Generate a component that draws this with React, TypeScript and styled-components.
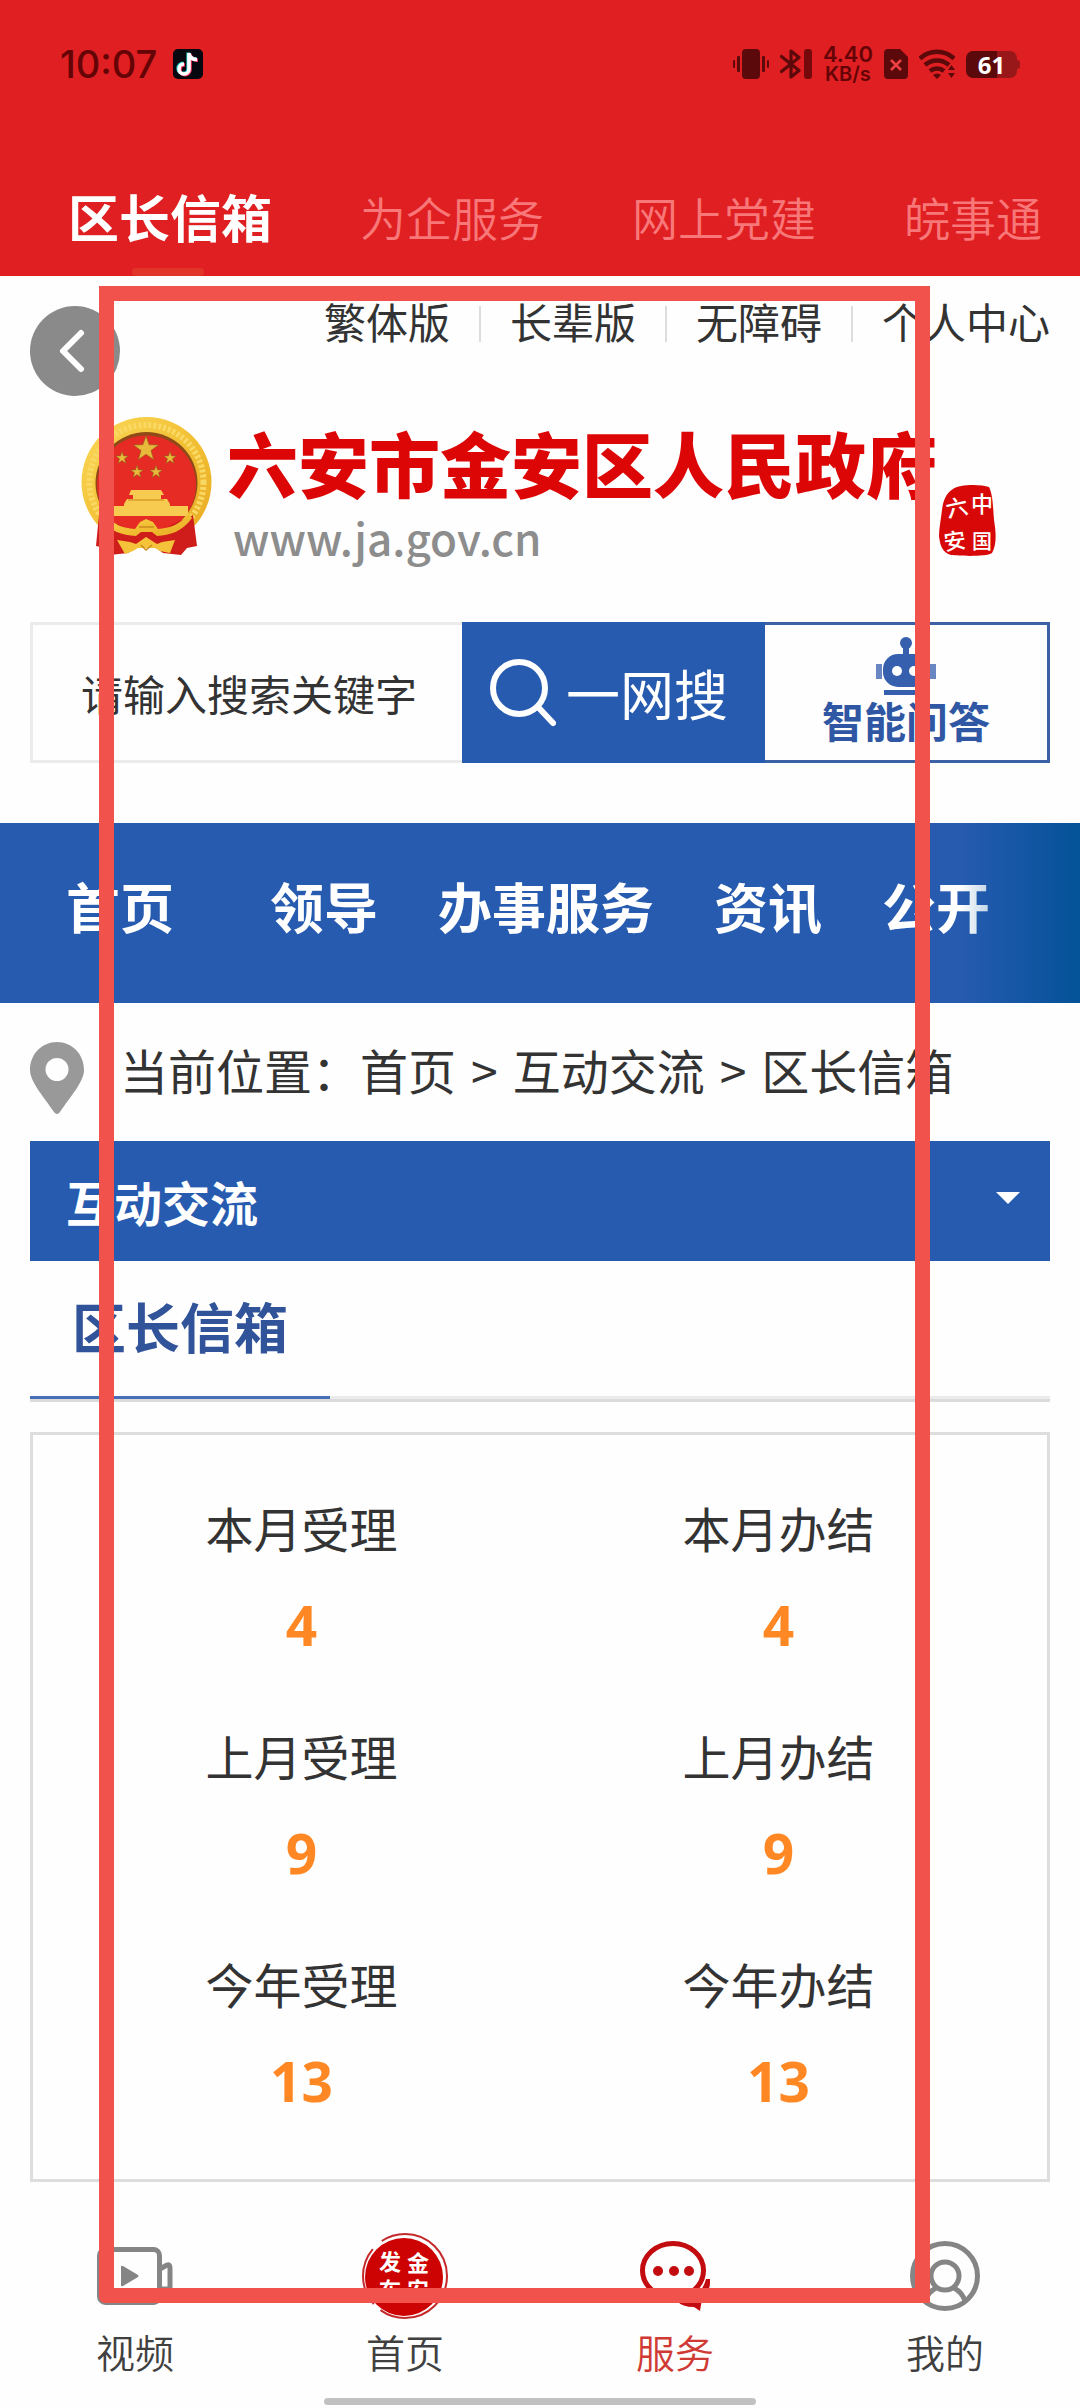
import React, { useState } from "react";
import styled, { createGlobalStyle } from "styled-components";

const BLUE = "#265bb0";
const INK = "#333333";
const STATUS_INK = "#5c090b";

const GlobalStyle = createGlobalStyle`
  *, *::before, *::after { box-sizing: border-box; }
  body {
    margin: 0;
    background: #fefefe;
    color: ${INK};
    font-family: "Noto Sans CJK SC", "Noto Sans", sans-serif;
  }
  button, input { font-family: inherit; }
  a { color: inherit; text-decoration: none; }
  ul, ol, dl, dd, h1, h2, p { margin: 0; padding: 0; list-style: none; }
`;

const Screen = styled.div`
  position: relative;
  display: flex;
  flex-direction: column;
  min-height: 100vh;
  overflow: hidden;
`;

/* ---------- App header ---------- */

const AppHeader = styled.header`
  background: #df1f21;
`;

const StatusBar = styled.div`
  display: flex;
  align-items: center;
  justify-content: space-between;
  height: 156px;
  padding: 0 63px 28px 60px;
  color: #650406;
`;

const StatusGroup = styled.div`
  display: flex;
  align-items: center;
  gap: ${(p: { $gap: number }) => p.$gap}px;
`;

const Clock = styled.time`
  font: 500 38px/48px Inter, sans-serif;
`;

const NetSpeed = styled.div`
  display: flex;
  flex-direction: column;
  align-items: center;
  font: 600 20px/20px Inter, sans-serif;

  span:first-child { font-size: 22px; }
`;

const Battery = styled.div`
  position: relative;
  display: flex;
  align-items: center;
  justify-content: center;
  width: 51px;
  height: 27px;
  border-radius: 7px;
  background: linear-gradient(to right, ${STATUS_INK} 61%, #98181a 61%);
  color: #ffffff;
  font: 700 24px/27px "Open Sans", sans-serif;

  &::after {
    content: "";
    position: absolute;
    right: -3px;
    top: 9px;
    width: 3px;
    height: 9px;
    border-radius: 0 3px 3px 0;
    background: #98181a;
  }
`;

const Tabs = styled.nav`
  display: flex;
  height: 120px;
  padding-left: 24px;
  overflow: hidden;
`;

const Tab = styled.a<{ $active?: boolean }>`
  position: relative;
  flex: none;
  padding: 0 44px;
  font-size: ${(p) => (p.$active ? 51 : 46)}px;
  font-weight: ${(p) => (p.$active ? 700 : 350)};
  line-height: 120px;
  color: ${(p) => (p.$active ? "#ffffff" : "#f87779")};
  white-space: nowrap;

  &::after {
    content: "";
    display: ${(p) => (p.$active ? "block" : "none")};
    position: absolute;
    left: calc(50% - 38px);
    bottom: 0;
    width: 72px;
    height: 8px;
    border-radius: 4px;
    background: #e2352a;
  }
`;

/* ---------- Site header ---------- */

const SiteHeader = styled.header`
  position: relative;
`;

const BackButton = styled.button`
  position: absolute;
  left: 30px;
  top: 30px;
  width: 90px;
  height: 90px;
  padding: 0;
  border: 0;
  border-radius: 50%;
  background: #8a8a8a;
`;

const QuickLinks = styled.ul`
  display: flex;
  justify-content: flex-end;
  height: 90px;
  padding-right: 30px;
`;

const QuickLink = styled.li`
  display: flex;
  align-items: center;
  font-size: 42px;
  line-height: 90px;
  white-space: nowrap;

  & + &::before {
    content: "";
    width: 2px;
    height: 36px;
    margin: 6px 29px 0;
    background: #dddddd;
  }
`;

const Brand = styled.div`
  display: flex;
  align-items: flex-start;
  height: 154px;
  margin: 51px 0;
  padding-left: 81px;
`;

const BrandText = styled.div`
  margin-left: 15px;
`;

const BrandName = styled.h1`
  color: #dd0606;
  font-size: 71px;
  font-weight: 900;
  line-height: 88px;
  white-space: nowrap;
`;

const BrandUrl = styled.p`
  padding-left: 6px;
  color: #8d8d8d;
  font-size: 44px;
  font-weight: 500;
  line-height: 64px;
`;

const BrandSeal = styled.svg`
  flex: none;
  margin: 67px 0 0 2px;
`;

const Search = styled.form`
  display: flex;
  height: 141px;
  margin: 0 30px 60px;
`;

const SearchInput = styled.input`
  flex: 1;
  min-width: 0;
  padding: 0 0 0 48px;
  border: 3px solid #ebebeb;
  border-right: 0;
  border-radius: 0;
  background: transparent;
  color: ${INK};
  font-size: 42px;
  outline: none;

  &::placeholder {
    color: ${INK};
    opacity: 1;
  }
`;

const SearchButton = styled.button`
  display: flex;
  align-items: center;
  gap: 10px;
  width: 303px;
  padding: 0 0 0 28px;
  border: 0;
  background: ${BLUE};
  color: #ffffff;
  font-size: 54px;
  line-height: 78px;
  white-space: nowrap;
`;

const AskButton = styled.button`
  display: flex;
  flex-direction: column;
  align-items: center;
  width: 285px;
  padding: 12px 0 0;
  border: 3px solid #3b62a5;
  border-left: 0;
  background: transparent;
  color: #2f57a3;
  font-size: 42px;
  font-weight: 700;
  line-height: 50px;
`;

const MainNav = styled.nav`
  position: relative;
  overflow: hidden;
  background: ${BLUE};

  &::after {
    content: "";
    position: absolute;
    inset: 0 0 0 auto;
    width: 120px;
    background: linear-gradient(to right, rgba(4, 82, 152, 0), #045298);
  }
`;

const MainNavList = styled.ul`
  display: flex;
  gap: 60px;
  height: 180px;
  padding-left: 66px;
  color: #ffffff;
  font-size: 54px;
  font-weight: 700;
  line-height: 166px;
  white-space: nowrap;

  li:first-child { margin-right: 36px; }
`;

/* ---------- Page content ---------- */

const Content = styled.main`
  padding: 0 30px;
`;

const Breadcrumb = styled.nav`
  display: flex;
  gap: 36px;
  height: 138px;
  padding-top: 39px;
  font-size: 48px;
  line-height: 54px;
  white-space: nowrap;
`;

const Separator = styled.span`
  padding: 0 15px;
`;

const MenuToggle = styled.button`
  display: flex;
  align-items: center;
  justify-content: space-between;
  width: 100%;
  height: 120px;
  padding: 0 30px 0 36px;
  border: 0;
  background: ${BLUE};
  color: #ffffff;
  font-size: 48px;
  font-weight: 700;
`;

const Caret = styled.span`
  margin-bottom: 6px;
  border: 12px solid transparent;
  border-top-color: #ffffff;
  border-bottom: 0;
`;

const SectionBar = styled.div`
  display: flex;
  margin-bottom: 30px;
  border-bottom: 3px solid #dbdbdb;
  box-shadow: inset 0 -3px #ebebeb;
`;

const SectionTitle = styled.h2`
  height: 138px;
  padding: 0 42px;
  border-bottom: 3px solid #466fb8;
  color: #31539a;
  font-size: 54px;
  font-weight: 700;
  line-height: 130px;
`;

const Stats = styled.dl`
  display: grid;
  grid-template-columns: 1fr 1fr;
  padding: 30px;
  border: 3px solid #dddddd;
`;

const Stat = styled.div`
  padding: 14px 0 18px;
  text-align: center;
`;

const StatLabel = styled.dt`
  font-size: 48px;
  line-height: 96px;
`;

const StatValue = styled.dd`
  color: #ff8824;
  font: 700 55px/100px "Open Sans", sans-serif;
`;

/* ---------- Bottom bar ---------- */

const BottomBar = styled.footer`
  margin-top: auto;
  padding: 49px 0 3px;
`;

const BottomTabs = styled.nav`
  display: grid;
  grid-template-columns: repeat(4, 1fr);
`;

const BottomTab = styled.a<{ $active?: boolean }>`
  display: flex;
  flex-direction: column;
  align-items: center;
  color: ${(p) => (p.$active ? "#cf3a34" : "#404040")};
  font-size: 39px;
  font-weight: 350;
  line-height: 60px;

  svg { height: 90px; }
`;

const HomeIndicator = styled.div`
  width: 40%;
  height: 7px;
  margin: 17px auto 0;
  border-radius: 4px;
  background: #c1c1c1;
`;

/* Outline drawn over the page as an annotation */
const Annotation = styled.div`
  position: absolute;
  inset: 286px 150px 105px 99px;
  border: 15px solid #f1524c;
  border-bottom-left-radius: 6px;
  pointer-events: none;
`;

/* ---------- Drawings ---------- */

const TiktokIcon = () => (
  <svg width="30" height="30" viewBox="0 0 30 30">
    <rect width="30" height="30" rx="5" fill="#07080f" />
    <g fill="none" strokeWidth="3.6">
      <path d="M16 4v16a5 5 0 1 1-5-5M16 5c1 4 4 5.500 8 5.500" stroke="#25d5d8" transform="translate(-.8 -.6)" />
      <path d="M16 4v16a5 5 0 1 1-5-5M16 5c1 4 4 5.500 8 5.500" stroke="#f03460" transform="translate(1 .8)" />
      <path d="M16 4v16a5 5 0 1 1-5-5M16 5c1 4 4 5.500 8 5.500" stroke="#fff" />
    </g>
  </svg>
);

const VibrateIcon = () => (
  <svg width="36" height="30" viewBox="0 0 36 30" fill={STATUS_INK}>
    <rect x="9" width="18" height="30" rx="4" />
    <rect x="4" y="7" width="3" height="16" rx="1" />
    <rect y="11" width="2" height="8" rx="1" />
    <rect x="29" y="7" width="3" height="16" rx="1" />
    <rect x="34" y="11" width="2" height="8" rx="1" />
  </svg>
);

const BluetoothIcon = () => (
  <svg width="32" height="30" viewBox="0 0 32 30">
    <path d="M1.500 7.500 19 21.500l-8 6.500V2l8 6.500-17.500 14" fill="none" stroke={STATUS_INK} strokeWidth="3.200" strokeLinejoin="round" strokeLinecap="round" />
    <rect x="24" y="0" width="8" height="30" rx="3" fill="#76090c" />
  </svg>
);

const SimIcon = () => (
  <svg width="24" height="30" viewBox="0 0 24 30">
    <path d="M4 0h12l8 8v18a4 4 0 0 1-4 4H4a4 4 0 0 1-4-4V4a4 4 0 0 1 4-4z" fill={STATUS_INK} />
    <path d="m7 11 10 10M17 11 7 21" stroke="#ec4044" strokeWidth="2.600" />
  </svg>
);

const WifiIcon = () => (
  <svg width="36" height="30" viewBox="0 0 36 30">
    <g fill="none" stroke={STATUS_INK} strokeWidth="4.500">
      <path d="M1 9.500a25 25 0 0 1 34 0" />
      <path d="M6 16a18 18 0 0 1 24 0" />
      <path d="M11 22a11 11 0 0 1 14 0" />
    </g>
    <path d="M14 26a6 6 0 0 1 8 0l-4 4zM32.500 16l3.500 5h-7zM32.500 29l3.500-5h-7z" fill={STATUS_INK} />
  </svg>
);

const starPoints = (cx: number, cy: number, r: number) =>
  Array.from({ length: 10 }, (_, i) => {
    const a = -Math.PI / 2 + (i * Math.PI) / 5;
    const d = i % 2 ? r * 0.4 : r;
    return `${(cx + d * Math.cos(a)).toFixed(1)},${(cy + d * Math.sin(a)).toFixed(1)}`;
  }).join(" ");

const EmblemSvg = styled.svg`
  flex: none;
`;

const Emblem = () => (
  <EmblemSvg width="131" height="139" viewBox="0 0 131 139">
    <defs>
      <linearGradient id="gold" x1="0" y1="0" x2="1" y2="1">
        <stop offset="0" stopColor="#fbd95a" />
        <stop offset=".5" stopColor="#f2c034" />
        <stop offset="1" stopColor="#e8a923" />
      </linearGradient>
    </defs>
    <circle cx="65.500" cy="65" r="65" fill="url(#gold)" />
    <circle cx="65.500" cy="65" r="57" fill="none" stroke="#f9d964" strokeWidth="6" strokeDasharray="3 2" />
    <circle cx="65.500" cy="66" r="51" fill="#8f4a17" />
    <circle cx="65.500" cy="68" r="49.500" fill="#e62a24" />
    <path d="M18 98c12 8 19 8 29 14h38c8-8 17-8 27-14l4 31-10 2-6 7-18-2-8-6H55l-8 6-18 2-5-7-9-2z" fill="#cf1d1b" />
    <g fill="#e9b93c" stroke="#8a6a1d" strokeWidth=".6">
      <polygon points={starPoints(65, 32, 13)} />
      <polygon points={starPoints(41, 41, 6.5)} />
      <polygon points={starPoints(89, 41, 6.5)} />
      <polygon points={starPoints(56, 55, 6.5)} />
      <polygon points={starPoints(75, 55, 6.5)} />
    </g>
    <path d="M50 73h30l3 5h-3v4h6l3 5v2h18v10H25V89h18v-2l3-5h6v-4h-4z" fill="#f7cb50" />
    <path d="M47 83h36" stroke="#d99b2a" strokeWidth="1.500" />
    <path d="M23 96c9 12 19 15 31 16l5-7 6-3 7 3 5 7c12-1 22-4 31-16l3 5c-10 14-22 17-35 18l-5-4H60l-5 4c-14-1-26-4-35-18z" fill="url(#gold)" />
    <path d="m36 123 13 2 6 2 10-7 11 7 5-2 13-2-5 13-10-2-5-3H57l-5 3-8 3z" fill="#f4c33a" />
    <path d="M58 110h15M60 128l5 5 6-5" stroke="#c98a1e" strokeWidth="1.500" fill="none" />
  </EmblemSvg>
);

const LiuanSeal = () => (
  <BrandSeal width="57" height="73" viewBox="0 0 57 73">
    <path d="M14 5c6-5 28-5 36-2 4 8 4 20 5 33 2 12 3 24-2 33-6 4-32 3-41 2C4 69 1 62 0 52c0-8 2-17 3-26 1-9 4-17 11-21z" fill="#d80808" />
    <g fill="#fff" fontSize="22" fontWeight="500">
      <text x="7" y="32" transform="rotate(-12 16 24)">六</text>
      <text x="32" y="28">中</text>
      <text x="5" y="65" transform="rotate(-8 16 58)">安</text>
      <text x="33" y="65" fontSize="20">国</text>
    </g>
  </BrandSeal>
);

const SearchIcon = () => (
  <svg width="66" height="70" viewBox="0 0 66 70" fill="none" stroke="#fff" strokeWidth="6">
    <circle cx="29" cy="30" r="26" />
    <path d="m48 49 15 16" strokeWidth="6" strokeLinecap="round" />
  </svg>
);

const RobotIcon = () => (
  <svg width="60" height="58" viewBox="0 0 60 58" fill="#365fae">
    <circle cx="30" cy="6" r="6" />
    <path d="M27 9h6v10h-6z" />
    <path d="M0 27h6v15H0zM54 27h6v15h-6z" opacity=".75" />
    <rect x="7" y="17" width="46" height="33" rx="15" />
    <path d="M8 53h44v5H8z" />
    <circle cx="21" cy="34" r="5" fill="#fff" />
    <circle cx="38" cy="34" r="5" fill="#fff" />
  </svg>
);

const PinSvg = styled.svg`
  flex: none;
`;

const PinIcon = () => (
  <PinSvg width="54" height="72" viewBox="0 0 54 72">
    <path d="M27 0c15 0 27 12 27 28 0 12-14 27-24 42q-3 4-6 0C14 55 0 40 0 28 0 12 12 0 27 0zm0 16a11.500 11.500 0 1 0 0 23 11.500 11.500 0 0 0 0-23z" fill="#999" fillRule="evenodd" />
  </PinSvg>
);

const VideoIcon = () => (
  <svg width="76" viewBox="0 0 76 90" fill="none" stroke="#858585" strokeWidth="5">
    <rect x="2.500" y="18.500" width="60" height="53" rx="6" />
    <path d="M63 38l7-4q3-1 3 3v21H63" strokeLinejoin="round" />
    <path d="M24 36v18q0 2 2 1l15-9q1-1 0-2l-15-9q-2-1-2 1z" fill="#858585" stroke="none" />
  </svg>
);

const NewsSealIcon = () => (
  <svg width="86" viewBox="0 0 86 90">
    <circle cx="43" cy="45" r="42" fill="none" stroke="#c5282a" strokeWidth="2" strokeDasharray="92 9 60 12" />
    <circle cx="42" cy="46" r="39" fill="#cd0202" />
    <g fill="#fff" fontSize="22" fontWeight="700">
      <text x="17" y="39">发</text>
      <text x="45" y="40">金</text>
      <text x="17" y="67">布</text>
      <text x="45" y="67">安</text>
    </g>
  </svg>
);

const ChatIcon = () => (
  <svg width="70" viewBox="0 0 70 90" fill="#c20c10">
    <ellipse cx="33" cy="39.500" rx="30.500" ry="27" fill="none" stroke="#c20c10" strokeWidth="5" />
    <path d="M66 48h4q1 12-8 20l-2 12-6-4q-12 0-17-6 24-2 29-22z" />
    <circle cx="18" cy="40" r="5" />
    <circle cx="34" cy="40" r="5" />
    <circle cx="49" cy="40" r="5" />
  </svg>
);

const UserIcon = () => (
  <svg width="70" viewBox="0 0 70 90" fill="none" stroke="#858585" strokeWidth="5">
    <circle cx="35" cy="45" r="32.500" />
    <circle cx="35" cy="45" r="14" />
    <path d="M15 70q3-9 11-13M55 70q-3-9-11-13" />
  </svg>
);

/* ---------- Data ---------- */

const TABS = ["区长信箱", "为企服务", "网上党建", "皖事通"];
const QUICK_LINKS = ["繁体版", "长辈版", "无障碍", "个人中心"];
const NAV_ITEMS = ["首页", "领导", "办事服务", "资讯", "公开"];
const STATS = [
  ["本月受理", 4],
  ["本月办结", 4],
  ["上月受理", 9],
  ["上月办结", 9],
  ["今年受理", 13],
  ["今年办结", 13],
];
const BOTTOM_TABS = [
  { label: "视频", icon: <VideoIcon /> },
  { label: "首页", icon: <NewsSealIcon /> },
  { label: "服务", icon: <ChatIcon />, active: true },
  { label: "我的", icon: <UserIcon /> },
];

export default function App() {
  const [menuOpen, setMenuOpen] = useState(false);

  return (
    <>
      <GlobalStyle />
      <Screen>
        <AppHeader>
          <StatusBar>
            <StatusGroup $gap={16}>
              <Clock>10:07</Clock>
              <TiktokIcon />
            </StatusGroup>
            <StatusGroup $gap={11}>
              <VibrateIcon />
              <BluetoothIcon />
              <NetSpeed>
                <span>4.40</span>
                <span>KB/s</span>
              </NetSpeed>
              <SimIcon />
              <WifiIcon />
              <Battery>61</Battery>
            </StatusGroup>
          </StatusBar>
          <Tabs aria-label="频道">
            {TABS.map((label, i) => (
              <Tab key={label} href="#" $active={i === 0}>
                {label}
              </Tab>
            ))}
          </Tabs>
        </AppHeader>

        <SiteHeader>
          <QuickLinks>
            {QUICK_LINKS.map((label) => (
              <QuickLink key={label}>
                <a href="#">{label}</a>
              </QuickLink>
            ))}
          </QuickLinks>
          <BackButton type="button" aria-label="返回">
            <svg width="90" height="90" viewBox="0 0 90 90">
              <path d="M51 27 33 45l18 18" fill="none" stroke="#fff" strokeWidth="6" strokeLinecap="round" strokeLinejoin="round" />
            </svg>
          </BackButton>
          <Brand>
            <Emblem />
            <BrandText>
              <BrandName>六安市金安区人民政府</BrandName>
              <BrandUrl>www.ja.gov.cn</BrandUrl>
            </BrandText>
            <LiuanSeal />
          </Brand>
          <Search onSubmit={(e) => e.preventDefault()}>
            <SearchInput type="text" aria-label="搜索关键字" placeholder="请输入搜索关键字" />
            <SearchButton type="submit">
              <SearchIcon />
              一网搜
            </SearchButton>
            <AskButton type="button">
              <RobotIcon />
              智能问答
            </AskButton>
          </Search>
          <MainNav>
            <MainNavList>
              {NAV_ITEMS.map((label) => (
                <li key={label}>
                  <a href="#">{label}</a>
                </li>
              ))}
            </MainNavList>
          </MainNav>
        </SiteHeader>

        <Content>
          <Breadcrumb>
            <PinIcon />
            <div>
              当前位置：<a href="#">首页</a>
              <Separator>&gt;</Separator>
              <a href="#">互动交流</a>
              <Separator>&gt;</Separator>
              <a href="#">区长信箱</a>
            </div>
          </Breadcrumb>
          <MenuToggle type="button" aria-expanded={menuOpen} onClick={() => setMenuOpen(!menuOpen)}>
            互动交流
            <Caret />
          </MenuToggle>
          <SectionBar>
            <SectionTitle>区长信箱</SectionTitle>
          </SectionBar>
          <Stats>
            {STATS.map(([label, value]) => (
              <Stat key={label}>
                <StatLabel>{label}</StatLabel>
                <StatValue>{value}</StatValue>
              </Stat>
            ))}
          </Stats>
        </Content>

        <BottomBar>
          <BottomTabs>
            {BOTTOM_TABS.map((tab) => (
              <BottomTab key={tab.label} href="#" $active={tab.active}>
                {tab.icon}
                {tab.label}
              </BottomTab>
            ))}
          </BottomTabs>
          <HomeIndicator />
        </BottomBar>

        <Annotation />
      </Screen>
    </>
  );
}
